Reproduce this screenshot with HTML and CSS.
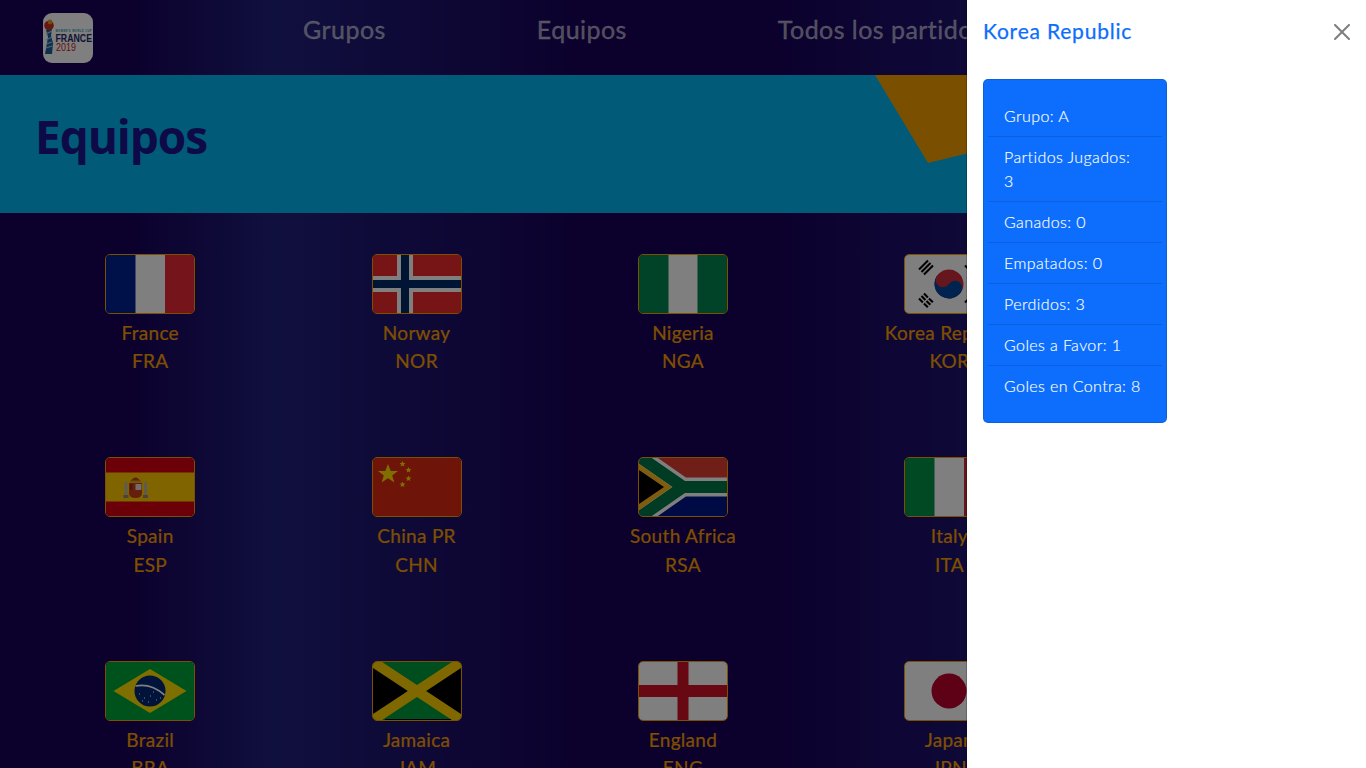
FILE: index.html
```html
<!DOCTYPE html>
<html lang="es">
<head>
<meta charset="utf-8">
<title>Equipos</title>
<link rel="stylesheet" href="styles.css">
</head>
<body>
<header class="nav">
  <svg class="logo" viewBox="0 0 50 50">
    <rect width="50" height="50" rx="9" fill="#fff"/>
    <path d="M3 17 L9 15 L8 23 L10 30 L9 41 L2 41 L4 30 L5 24Z" fill="#1c5f9c"/>
    <path d="M3 21 L9 18 M3 27 L9 24 M3 31 L9 29 M3 35 L9 33" stroke="#9fd0e8" stroke-width="1.2"/>
    <circle cx="6" cy="12.500" r="4.800" fill="#c8301e"/>
    <circle cx="7" cy="9" r="2.400" fill="#e99a1c"/>
    <text class="logo-small" x="12.500" y="19" textLength="36">WOMEN'S WORLD CUP</text>
    <text class="logo-big" x="12.500" y="28.500" textLength="36.500" lengthAdjust="spacingAndGlyphs">FRANCE</text>
    <text class="logo-year" x="13" y="38" textLength="20" lengthAdjust="spacingAndGlyphs">2019</text>
  </svg>
  <nav class="nav-links">
    <a class="nav-link" href="#">Grupos</a>
    <a class="nav-link" href="#">Equipos</a>
    <a class="nav-link" href="#">Todos los partidos</a>
  </nav>
</header>

<section class="banner"><h1 class="banner-title">Equipos</h1></section>

<main class="teams">
  <article class="team">
    <svg class="flag" viewBox="0 0 88 58" preserveAspectRatio="none"><rect width="30" height="58" fill="#002395"/><rect x="29.500" width="29.500" height="58" fill="#fff"/><rect x="59" width="29" height="58" fill="#ed2939"/></svg>
    <div class="team-name">France</div><div class="team-code">FRA</div>
  </article>
  <article class="team">
    <svg class="flag" viewBox="0 0 88 58" preserveAspectRatio="none"><rect width="88" height="58" fill="#ef2b2d"/><rect x="24" width="16" height="58" fill="#fff"/><rect y="21" width="88" height="16" fill="#fff"/><rect x="28" width="8" height="58" fill="#002868"/><rect y="25" width="88" height="8" fill="#002868"/></svg>
    <div class="team-name">Norway</div><div class="team-code">NOR</div>
  </article>
  <article class="team">
    <svg class="flag" viewBox="0 0 88 58" preserveAspectRatio="none"><rect width="88" height="58" fill="#008751"/><rect x="29.500" width="29" height="58" fill="#fff"/></svg>
    <div class="team-name">Nigeria</div><div class="team-code">NGA</div>
  </article>
  <article class="team">
    <svg class="flag" viewBox="0 0 88 58" preserveAspectRatio="none">
      <rect width="88" height="58" fill="#fff"/>
      <g transform="translate(44 29) rotate(33.690)">
        <circle r="14.500" fill="#cd2e3a"/>
        <path d="M-14.500 0 A14.500 14.500 0 0 0 14.500 0Z" fill="#0047a0"/>
        <circle cx="-7.250" r="7.250" fill="#cd2e3a"/>
        <circle cx="7.250" r="7.250" fill="#0047a0"/>
      </g>
      <path d="M14 14.500 L23 5.500 M16.500 17 L25.500 8 M19 19.500 L28 10.500" class="tri"/>
      <path d="M14 43.500 L23 52.500 M16.500 41 L25.500 50 M19 38.500 L28 47.500" class="tri tri-cut"/>
      <path d="M60 10.500 L69 19.500 M62.500 8 L71.500 17 M65 5.500 L74 14.500" class="tri"/>
      <path d="M60 47.500 L69 38.500 M62.500 50 L71.500 41 M65 52.500 L74 43.500" class="tri"/>
    </svg>
    <div class="team-name">Korea Republic</div><div class="team-code">KOR</div>
  </article>

  <article class="team">
    <svg class="flag" viewBox="0 0 88 58" preserveAspectRatio="none">
      <rect width="88" height="58" fill="#d80012"/><rect y="14.500" width="88" height="29" fill="#ffc800"/>
      <rect x="18.500" y="24" width="3" height="15" fill="#b9b9a0"/><rect x="38" y="24" width="3" height="15" fill="#b9b9a0"/>
      <rect x="17.500" y="37" width="5" height="3" fill="#8a8a70"/><rect x="37" y="37" width="5" height="3" fill="#8a8a70"/>
      <path d="M23 25 H36 V35 Q36 40 29.500 40 Q23 40 23 35Z" fill="#c8401a"/>
      <rect x="29.500" y="26" width="6" height="6" fill="#e8d8d0"/>
      <rect x="24" y="26" width="2.500" height="6" fill="#a02810"/>
      <path d="M24 24 Q29.500 15 35 24Z" fill="#c8401a"/>
      <rect x="24" y="22.500" width="11" height="2" fill="#e0a020"/>
    </svg>
    <div class="team-name">Spain</div><div class="team-code">ESP</div>
  </article>
  <article class="team">
    <svg class="flag" viewBox="0 0 88 58" preserveAspectRatio="none">
      <rect width="88" height="58" fill="#de2910"/>
      <polygon class="star" points="15,6 17.700,13 25,13 19.200,17.500 21.400,24.500 15,20.200 8.600,24.500 10.800,17.500 5,13 12.300,13"/>
      <polygon class="star" points="29.500,3 30.400,5.100 32.500,5.100 30.800,6.500 31.400,8.500 29.500,7.400 27.600,8.500 28.200,6.500 26.500,5.100 28.600,5.100"/>
      <polygon class="star" points="35.500,9 36.400,11.100 38.500,11.100 36.800,12.500 37.400,14.500 35.500,13.400 33.600,14.500 34.200,12.500 32.500,11.100 34.600,11.100"/>
      <polygon class="star" points="35.500,17.500 36.400,19.600 38.500,19.600 36.800,21 37.400,23 35.500,21.900 33.600,23 34.200,21 32.500,19.600 34.600,19.600"/>
      <polygon class="star" points="29.500,23.500 30.400,25.600 32.500,25.600 30.800,27 31.400,29 29.500,27.900 27.600,29 28.200,27 26.500,25.600 28.600,25.600"/>
    </svg>
    <div class="team-name">China PR</div><div class="team-code">CHN</div>
  </article>
  <article class="team">
    <svg class="flag" viewBox="0 0 88 58" preserveAspectRatio="none">
      <rect width="88" height="29" fill="#e03c31"/><rect y="29" width="88" height="29" fill="#001489"/>
      <path d="M-2 -3 L44 29 H90 M-2 61 L44 29" fill="none" stroke="#fff" stroke-width="19"/>
      <path d="M-2 -3 L44 29 H90 M-2 61 L44 29" fill="none" stroke="#007749" stroke-width="12"/>
      <polygon points="0,6 33,29 0,52" fill="#ffb81c"/>
      <polygon points="0,12 25,29 0,46" fill="#000"/>
    </svg>
    <div class="team-name">South Africa</div><div class="team-code">RSA</div>
  </article>
  <article class="team">
    <svg class="flag" viewBox="0 0 88 58" preserveAspectRatio="none"><rect width="30" height="58" fill="#009246"/><rect x="29.500" width="29.500" height="58" fill="#fff"/><rect x="59" width="29" height="58" fill="#ce2b37"/></svg>
    <div class="team-name">Italy</div><div class="team-code">ITA</div>
  </article>

  <article class="team">
    <svg class="flag" viewBox="0 0 88 58" preserveAspectRatio="none">
      <rect width="88" height="58" fill="#00a53a"/>
      <polygon points="44,7 80.500,29 44,51 7.500,29" fill="#ffdf00"/>
      <circle cx="44" cy="29" r="15.500" fill="#002776"/>
      <path d="M29.500 24 Q45 21 58.500 33" fill="none" stroke="#fff" stroke-width="1.700"/>
      <path d="M33 32 h1 M38 36 h1 M44 34 h1 M50 38 h1 M54 36 h1 M42 40 h1 M47 30 h1 M36 39 h1" stroke="#fff" stroke-width="1"/>
    </svg>
    <div class="team-name">Brazil</div><div class="team-code">BRA</div>
  </article>
  <article class="team">
    <svg class="flag" viewBox="0 0 88 58" preserveAspectRatio="none">
      <rect width="88" height="58" fill="#009b3a"/>
      <polygon points="0,5 35,29 0,53" fill="#000"/><polygon points="88,5 53,29 88,53" fill="#000"/>
      <path d="M0 0 L88 58 M88 0 L0 58" stroke="#fed100" stroke-width="10"/>
      <rect x="12" y="57" width="66" height="1" fill="#000"/>
    </svg>
    <div class="team-name">Jamaica</div><div class="team-code">JAM</div>
  </article>
  <article class="team">
    <svg class="flag" viewBox="0 0 88 58" preserveAspectRatio="none"><rect width="88" height="58" fill="#fff"/><rect x="38.500" width="11" height="58" fill="#ce1124"/><rect y="23" width="88" height="12" fill="#ce1124"/></svg>
    <div class="team-name">England</div><div class="team-code">ENG</div>
  </article>
  <article class="team">
    <svg class="flag" viewBox="0 0 88 58" preserveAspectRatio="none"><rect width="88" height="58" fill="#fff"/><circle cx="44" cy="29" r="17.500" fill="#bc002d"/></svg>
    <div class="team-name">Japan</div><div class="team-code">JPN</div>
  </article>
</main>

<div class="backdrop"></div>

<aside class="panel">
  <div class="panel-header">
    <h5 class="panel-title">Korea Republic</h5>
    <button class="close" type="button" aria-label="Close">
      <svg class="close-icon" viewBox="0 0 16 16"><path d="M.293.293a1 1 0 0 1 1.414 0L8 6.586 14.293.293a1 1 0 1 1 1.414 1.414L9.414 8l6.293 6.293a1 1 0 0 1-1.414 1.414L8 9.414l-6.293 6.293a1 1 0 0 1-1.414-1.414L6.586 8 .293 1.707a1 1 0 0 1 0-1.414z"/></svg>
    </button>
  </div>
  <div class="panel-body">
    <div class="stats">
      <ul class="stat-list">
        <li class="stat">Grupo: A</li>
        <li class="stat">Partidos Jugados: 3</li>
        <li class="stat">Ganados: 0</li>
        <li class="stat">Empatados: 0</li>
        <li class="stat">Perdidos: 3</li>
        <li class="stat">Goles a Favor: 1</li>
        <li class="stat">Goles en Contra: 8</li>
      </ul>
    </div>
  </div>
</aside>
</body>
</html>
```
FILE: styles.css
```css
* { box-sizing: border-box; }

html, body {
  margin: 0;
  height: 100%;
  overflow: hidden;
}

body {
  font-family: Lato, "Noto Sans", sans-serif;
  background: linear-gradient(90deg, #180058 0%, #180058 9%, #20207e 20%, #180058 44%, #180058 55%, #1e1472 72%, #1e1472 100%);
}

.nav {
  height: 75px;
  display: flex;
  align-items: flex-start;
  padding: 13px 0 0 43px;
}

.logo {
  width: 50px;
  height: 50px;
  flex: none;
}

.logo-small {
  font: 700 2.600px "Liberation Sans", sans-serif;
  fill: #2a8fb0;
}

.logo-big {
  font: 700 10.500px "Liberation Sans", sans-serif;
  fill: #1e2a6a;
}

.logo-year {
  font: 400 11px "Liberation Sans", sans-serif;
  fill: #d01a20;
}

.nav-links {
  display: flex;
  gap: 151px;
  margin-left: 210px;
  white-space: nowrap;
}

.nav-link {
  font-size: 25px;
  line-height: 32px;
  letter-spacing: 0.45px;
  -webkit-text-stroke: 0.3px;
  color: rgba(255, 255, 255, 0.6);
  text-decoration: none;
}

.banner {
  position: relative;
  height: 138px;
  background: #00b4f0;
  overflow: hidden;
  display: flex;
  align-items: center;
  padding: 0 0 16px 35px;
}

.banner::after {
  content: "";
  position: absolute;
  left: 875px;
  top: 0;
  width: 200px;
  height: 100px;
  background: #f5a000;
  clip-path: polygon(0 0, 100% 0, 100% 52px, 53px 88px);
}

.banner-title {
  margin: 0;
  font: 700 46px/1 "Open Sans", sans-serif;
  letter-spacing: -1.1px;
  color: #1c1490;
}

.teams {
  display: grid;
  grid-template-columns: repeat(4, 266.400px);
  grid-auto-rows: 203.400px;
  padding: 41px 0 0 17px;
}

.team {
  text-align: center;
  color: #faa000;
  font-size: 19px;
  line-height: 28.400px;
  letter-spacing: 0.3px;
  -webkit-text-stroke: 0.2px;
}

.flag {
  display: block;
  width: 90px;
  height: 60px;
  margin: 0 auto 5px;
  border: 1px solid #faa000;
  border-radius: 5px;
}

.tri {
  fill: none;
  stroke: #000;
  stroke-width: 2.100;
}

.tri-cut { stroke-dasharray: 5.500 1.500; }

.star { fill: #ffde00; }

.backdrop {
  position: fixed;
  inset: 0;
  background: rgba(0, 0, 0, 0.5);
}

.panel {
  position: fixed;
  top: 0;
  right: 0;
  bottom: 0;
  width: 400px;
  background: #fff;
  background-clip: padding-box;
  border-left: 1px solid rgba(0, 0, 0, 0.2);
  font-size: 16px;
  font-weight: 300;
  letter-spacing: 0.4px;
}

.panel-header {
  display: flex;
  justify-content: space-between;
  align-items: center;
  height: 63px;
  padding: 16px;
}

.panel-title {
  margin: 0 0 2px;
  font-size: 21px;
  line-height: 29px;
  font-weight: 400;
  letter-spacing: 0.8px;
  -webkit-text-stroke: 0.25px;
  color: #0d6efd;
}

.close {
  display: flex;
  padding: 0;
  border: 0;
  background: none;
  opacity: 0.5;
}

.close-icon {
  width: 16px;
  height: 16px;
}

.panel-body {
  padding: 16px;
}

.stats {
  width: 184px;
  padding: 16px 4px;
  background: #0d6efd;
  border: 1px solid rgba(0, 0, 0, 0.125);
  border-radius: 5px;
  color: #fff;
  -webkit-text-stroke: 0.15px;
}

.stat-list {
  list-style: none;
  margin: 0;
  padding: 0;
}

.stat {
  padding: 8px 20px 8px 16px;
  line-height: 24px;
  border-bottom: 1px solid rgba(0, 0, 0, 0.125);
}

.stat:last-child { border-bottom: 0; }
```
